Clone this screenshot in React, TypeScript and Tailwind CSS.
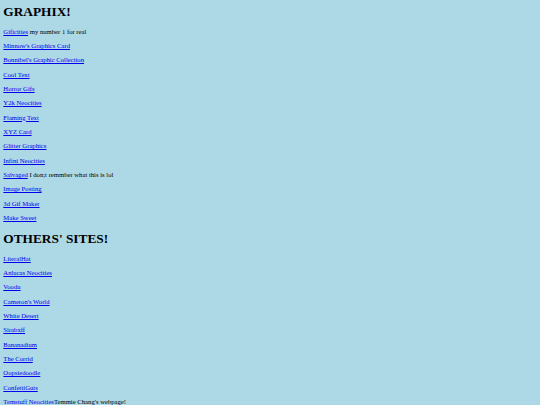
type Site = { name: string; note?: string; tight?: boolean };

const graphix: Site[] = [
  { name: 'Gificities', note: 'my number 1 for real' },
  { name: "Minnow's Graphics Card" },
  { name: "Bonnibel's Graphic Collection" },
  { name: 'Cool Text' },
  { name: 'Horror Gifs' },
  { name: 'Y2k Neocities' },
  { name: 'Flaming Text' },
  { name: 'XYZ Card' },
  { name: 'Glitter Graphics' },
  { name: 'Infini Neocities' },
  { name: 'Salvaged', note: 'I don;t remmber what this is lol' },
  { name: 'Image Posting' },
  { name: '3d Gif Maker' },
  { name: 'Make Sweet' },
];

const others: Site[] = [
  { name: 'LiteralHat' },
  { name: 'Anlucas Neocities' },
  { name: 'Voodu' },
  { name: "Cameron's World" },
  { name: 'White Desert' },
  { name: 'Sirabxff' },
  { name: 'Bananadium' },
  { name: 'The Corrid' },
  { name: 'Oopsiedoodle' },
  { name: 'ConfettiGuts' },
  { name: 'Temstuff Neocities', note: "Temmie Chang's webpage!", tight: true },
];

function LinkList({ title, sites }: { title: string; sites: Site[] }) {
  return (
    <section className="flex flex-col">
      <h1 className="text-[13.33px] leading-[15.33px] font-bold mb-[8.9px]">{title}</h1>
      <div className="flex flex-col gap-[6.67px]">
        {sites.map((s) => (
          <p key={s.name} className="text-[6.67px] leading-[7.67px] whitespace-nowrap">
            <a href="#" className="text-[#0000ee] underline">
              {s.name}
            </a>
            {s.note && (s.tight ? s.note : ' ' + s.note)}
          </p>
        ))}
      </div>
    </section>
  );
}

export default function App() {
  return (
    <div className="min-h-screen w-full bg-[#add8e6] text-black font-['Liberation_Serif',_'Times_New_Roman',_serif] px-[3.33px] pt-[3.5px] flex flex-col gap-[8.9px] overflow-hidden h-[405px]">
      <LinkList title="GRAPHIX!" sites={graphix} />
      <LinkList title="OTHERS' SITES!" sites={others} />
    </div>
  );
}
